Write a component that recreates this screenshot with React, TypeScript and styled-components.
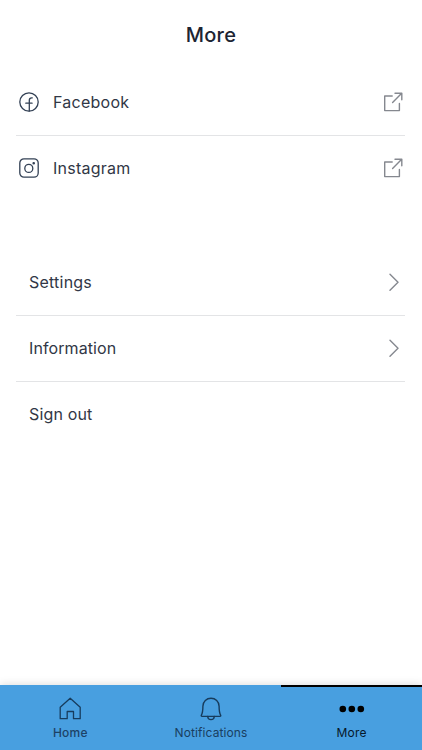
import React from 'react';
import styled, { createGlobalStyle } from 'styled-components';

const GlobalStyle = createGlobalStyle`
  * { box-sizing: border-box; }
  body { margin: 0; background: #fff; font-family: Inter, "Liberation Sans", sans-serif; }
`;

const Screen = styled.div`
  height: 750px;
  display: flex;
  flex-direction: column;
  background: #fff;
  overflow: hidden;
`;

const Title = styled.h1`
  margin: 0;
  height: 70px;
  line-height: 70px;
  text-align: center;
  font-size: 20px;
  font-weight: 450;
  letter-spacing: 0.3px;
  color: #1d2433;
`;

const Content = styled.main`
  flex: 1;
  display: flex;
  flex-direction: column;
  gap: 48px;
  padding: 0 17px 0 16px;
`;

const List = styled.nav``;

const Row = styled.a<{ $inset: number }>`
  display: flex;
  align-items: center;
  height: 66px;
  padding: 0 0 2px ${(p) => p.$inset}px;
  border-bottom: 1px solid #e3e4e6;
  color: #313746;
  &:last-child { border-bottom-color: transparent; }
`;

const RowLabel = styled.span<{ $spacing?: number }>`
  flex: 1;
  font-size: 16px;
  line-height: 20px;
  letter-spacing: ${(p) => p.$spacing ?? 0.15}px;
`;

const Icon = styled.svg<{ $gap?: number }>`
  display: block;
  flex: none;
  margin: 1px ${(p) => p.$gap ?? 0}px 0 0;
  fill: none;
  stroke: currentColor;
  stroke-linecap: round;
  stroke-linejoin: round;
`;

const LeadingIcon = styled(Icon)`
  color: #334155;
`;

const TrailingIcon = styled(Icon)`
  color: #85888f;
`;

const TabBar = styled.nav`
  display: grid;
  grid-template-columns: repeat(3, 1fr);
  height: 65.5px;
  background: #489fe0;
  box-shadow: 0 -1px 8px rgba(0, 0, 0, 0.13);
`;

const Tab = styled.a<{ $active?: boolean }>`
  display: flex;
  flex-direction: column;
  align-items: center;
  padding-top: 9px;
  border-top: 2px solid ${(p) => (p.$active ? '#000' : 'transparent')};
  color: ${(p) => (p.$active ? '#000' : '#173c5d')};
`;

const TabLabel = styled.span<{ $weight: number; $spacing: number; $color: string }>`
  margin-top: 4px;
  font-size: 12px;
  line-height: 16px;
  font-weight: ${(p) => p.$weight};
  letter-spacing: ${(p) => p.$spacing}px;
  color: ${(p) => p.$color};
`;

const FacebookIcon = () => (
  <LeadingIcon width="20" height="20" viewBox="0 0 20 20" strokeWidth="1.3" $gap={14}>
    <circle cx="10" cy="10" r="9.2" />
    <path d="M10.3 19V8.4c0-1.8 1-2.6 2.4-2.6h.6M6.8 11.2h6.3" />
  </LeadingIcon>
);

const InstagramIcon = () => (
  <LeadingIcon width="20" height="20" viewBox="0 0 20 20" strokeWidth="1.3" $gap={14}>
    <rect x="0.8" y="0.8" width="18.4" height="18.4" rx="4.2" />
    <circle cx="9.8" cy="10.4" r="4" />
    <circle cx="14.7" cy="5.2" r="0.65" fill="currentColor" />
  </LeadingIcon>
);

const ExternalIcon = () => (
  <TrailingIcon width="20" height="20" viewBox="0 0 20 20" strokeWidth="1.4" $gap={2}>
    <path d="M9.2 4H1.7v14.6h14.7v-7.2M9.6 10.5 18.7 1.3M12 1.3h6.8v6.5" />
  </TrailingIcon>
);

const ChevronIcon = () => (
  <TrailingIcon width="12" height="18" viewBox="0 0 12 18" strokeWidth="1.4" $gap={5}>
    <path d="M2 1.3 10 9.3 2 17.2" />
  </TrailingIcon>
);

const HomeIcon = () => (
  <Icon width="24" height="24" viewBox="0 0 24 24" strokeWidth="1.3">
    <path d="M2.2 10.2 12.2 1.2l10 9v11.5h-6.7v-7.2H9.2v7.2h-7Z" />
  </Icon>
);

const BellIcon = () => (
  <Icon width="24" height="24" viewBox="0 0 24 24" strokeWidth="1.4">
    <path d="M3.9 9.3C3.9 4.4 7.6 1.3 12 1.3s8.1 3.1 8.1 8c0 4.7.5 7.2 1.5 8.8.4.7.1 1.3-.6 1.3H3c-.7 0-1-.6-.6-1.3 1-1.6 1.5-4.1 1.5-8.8Z" />
    <path d="M8.7 19.5c.3 4.2 6.3 4.2 6.6 0" />
  </Icon>
);

const DotsIcon = () => (
  <Icon width="26" height="24" viewBox="0 0 26 24">
    {[3.8, 12.8, 21.8].map((x) => (
      <circle key={x} cx={x} cy="12" r="3.3" fill="currentColor" stroke="none" />
    ))}
  </Icon>
);

export default function App() {
  return (
    <>
      <GlobalStyle />
      <Screen>
        <Title>More</Title>
        <Content>
          <List>
            <Row $inset={3}><FacebookIcon /><RowLabel $spacing={0.25}>Facebook</RowLabel><ExternalIcon /></Row>
            <Row $inset={3}><InstagramIcon /><RowLabel $spacing={0.25}>Instagram</RowLabel><ExternalIcon /></Row>
          </List>
          <List>
            <Row $inset={13}><RowLabel $spacing={0.22}>Settings</RowLabel><ChevronIcon /></Row>
            <Row $inset={13}><RowLabel $spacing={0.1}>Information</RowLabel><ChevronIcon /></Row>
            <Row $inset={13}><RowLabel>Sign out</RowLabel></Row>
          </List>
        </Content>
        <TabBar>
          <Tab><HomeIcon /><TabLabel $weight={500} $spacing={0.2} $color="#1d4266">Home</TabLabel></Tab>
          <Tab><BellIcon /><TabLabel $weight={400} $spacing={0.1} $color="#193e61">Notifications</TabLabel></Tab>
          <Tab $active><DotsIcon /><TabLabel $weight={400} $spacing={0.25} $color="#06182a">More</TabLabel></Tab>
        </TabBar>
      </Screen>
    </>
  );
}
